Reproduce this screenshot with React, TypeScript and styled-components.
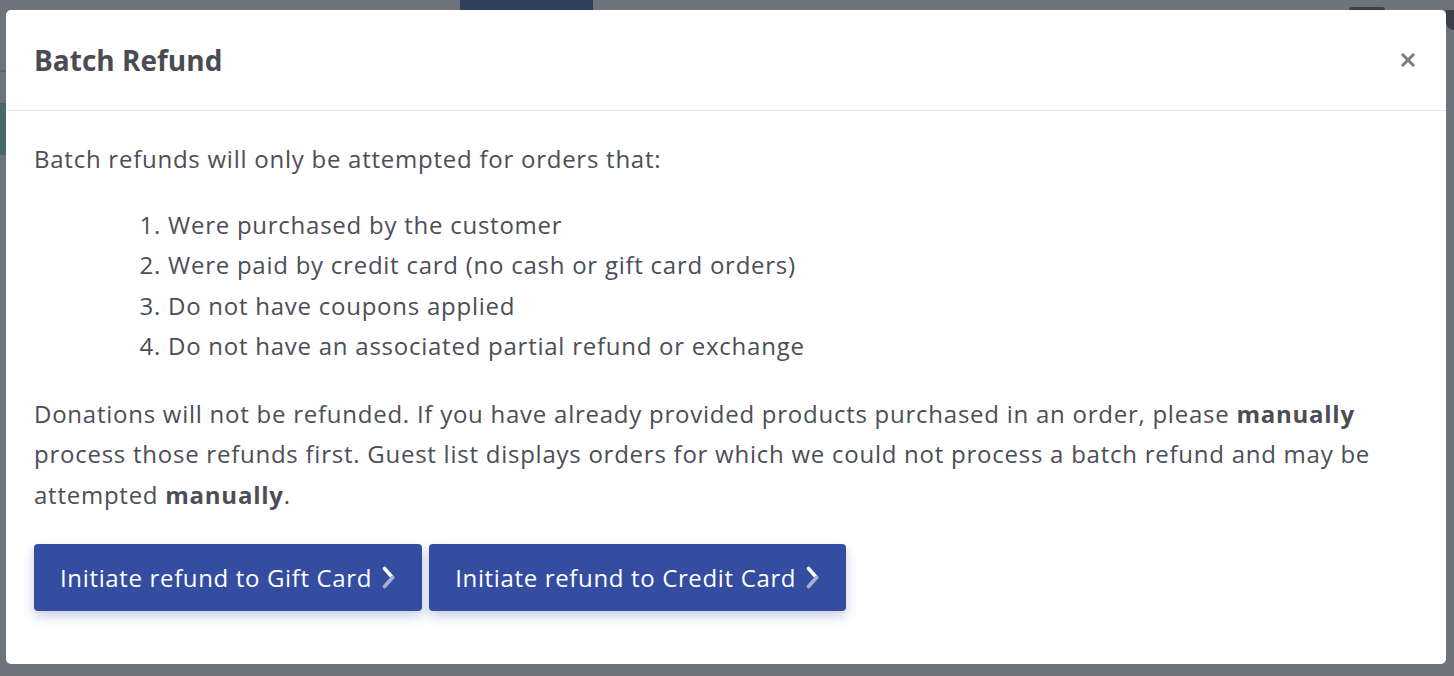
import styled, { createGlobalStyle } from "styled-components";

const GlobalStyle = createGlobalStyle`
  html, body {
    margin: 0;
    padding: 0;
    background: #6f737b;
  }
  body {
    font-family: "Open Sans", "Noto Sans", sans-serif;
    color: #4b4e56;
  }
`;

const Backdrop = styled.div`
  width: 1454px;
  height: 676px;
  box-sizing: border-box;
  background: #6f737b;
  display: flex;
  flex-direction: column;
`;

const TopStrip = styled.div`
  height: 10px;
  display: flex;
  align-items: flex-end;
  padding-left: 460px;
`;

const TabBehind = styled.div<{ $w: number; $h: number; $ml: number }>`
  width: ${(p) => p.$w}px;
  height: ${(p) => p.$h}px;
  margin-left: ${(p) => p.$ml}px;
  background: ${(p) => (p.$h < 10 ? "#3d4049" : "#333f5f")};
  border-radius: ${(p) => (p.$h < 10 ? "4px 4px 0 0" : "0")};
`;

const Frame = styled.div`
  display: flex;
`;

const Gutter = styled.div<{ $w: number }>`
  width: ${(p) => p.$w}px;
  display: flex;
  flex-direction: column;
`;

const Mark = styled.div<{ $top: number; $h: number; $c: string; $round?: boolean }>`
  margin-top: ${(p) => p.$top}px;
  height: ${(p) => p.$h}px;
  background: ${(p) => p.$c};
  border-radius: ${(p) => (p.$round ? "0 0 0 12px" : "0")};
`;

const Modal = styled.div`
  width: 1440px;
  background: #fff;
  border-radius: 5px;
  overflow: hidden;
`;

const Header = styled.header`
  height: 100px;
  display: flex;
  align-items: center;
  justify-content: space-between;
  padding: 0 30px 0 28px;
  border-bottom: 1px solid #e4e4e6;
`;

const Title = styled.h5`
  margin: 0;
  font-size: 28px;
  font-weight: 700;
  color: #4a4c53;
`;

const Close = styled.button`
  border: 0;
  background: none;
  padding: 0;
  width: 16px;
  height: 14px;
  display: flex;
  cursor: pointer;
`;

const Body = styled.div`
  padding: 28px 28px 53px;
  font-size: 24px;
  line-height: 40.5px;
  letter-spacing: 0.75px;
`;

const Para = styled.p<{ $gap: number }>`
  margin: 0 0 ${(p) => p.$gap}px;
`;

const List = styled.ol`
  margin: 0 0 27px;
  padding-left: 134px;
`;

const Actions = styled.div`
  display: flex;
  gap: 7px;
`;

const Button = styled.button`
  height: 67px;
  padding: 0 27px 0 26px;
  border: 0;
  border-radius: 4px;
  background: #344da0;
  color: #fff;
  font-family: inherit;
  font-size: 24px;
  letter-spacing: 0.65px;
  display: flex;
  align-items: center;
  gap: 10px;
  box-shadow: 0 5px 12px rgba(52, 77, 160, 0.28);
  cursor: pointer;
`;

const Chevron = () => (
  <svg width="13" height="23" viewBox="0 0 13 23">
    <path d="M2.5 2.5 L10.5 11.5" stroke="#fff" strokeWidth="3.6" strokeLinecap="round" />
    <path d="M10.5 11.5 L2.5 20.5" stroke="#a7b0d8" strokeWidth="3.6" strokeLinecap="round" />
  </svg>
);

const App = () => {
  return (
    <>
      <GlobalStyle />
      <Backdrop>
        <TopStrip>
          <TabBehind $w={133} $h={10} $ml={0} />
          <TabBehind $w={36} $h={3} $ml={756} />
        </TopStrip>
        <Frame>
          <Gutter $w={6}>
            <Mark $top={60} $h={2} $c="#4e6585" />
            <Mark $top={31} $h={52} $c="#466a66" />
          </Gutter>
          <Modal>
            <Header>
              <Title>Batch Refund</Title>
              <Close aria-label="Close">
                <svg width="16" height="14" viewBox="0 0 16 14">
                  <path d="M2 1 L14 13 M14 1 L2 13" stroke="#7d7e82" strokeWidth="3" />
                </svg>
              </Close>
            </Header>
            <Body>
              <Para $gap={25}>Batch refunds will only be attempted for orders that:</Para>
              <List>
                <li>Were purchased by the customer</li>
                <li>Were paid by credit card (no cash or gift card orders)</li>
                <li>Do not have coupons applied</li>
                <li>Do not have an associated partial refund or exchange</li>
              </List>
              <Para $gap={29}>
                Donations will not be refunded. If you have already provided products purchased in an
                order, please <b>manually</b> process those refunds first. Guest list displays orders
                for which we could not process a batch refund and may be attempted <b>manually</b>.
              </Para>
              <Actions>
                <Button>
                  Initiate refund to Gift Card <Chevron />
                </Button>
                <Button>
                  Initiate refund to Credit Card <Chevron />
                </Button>
              </Actions>
            </Body>
          </Modal>
          <Gutter $w={8}>
            <Mark $top={0} $h={20} $c="#3d4049" $round />
          </Gutter>
        </Frame>
      </Backdrop>
    </>
  );
};

export default App;
